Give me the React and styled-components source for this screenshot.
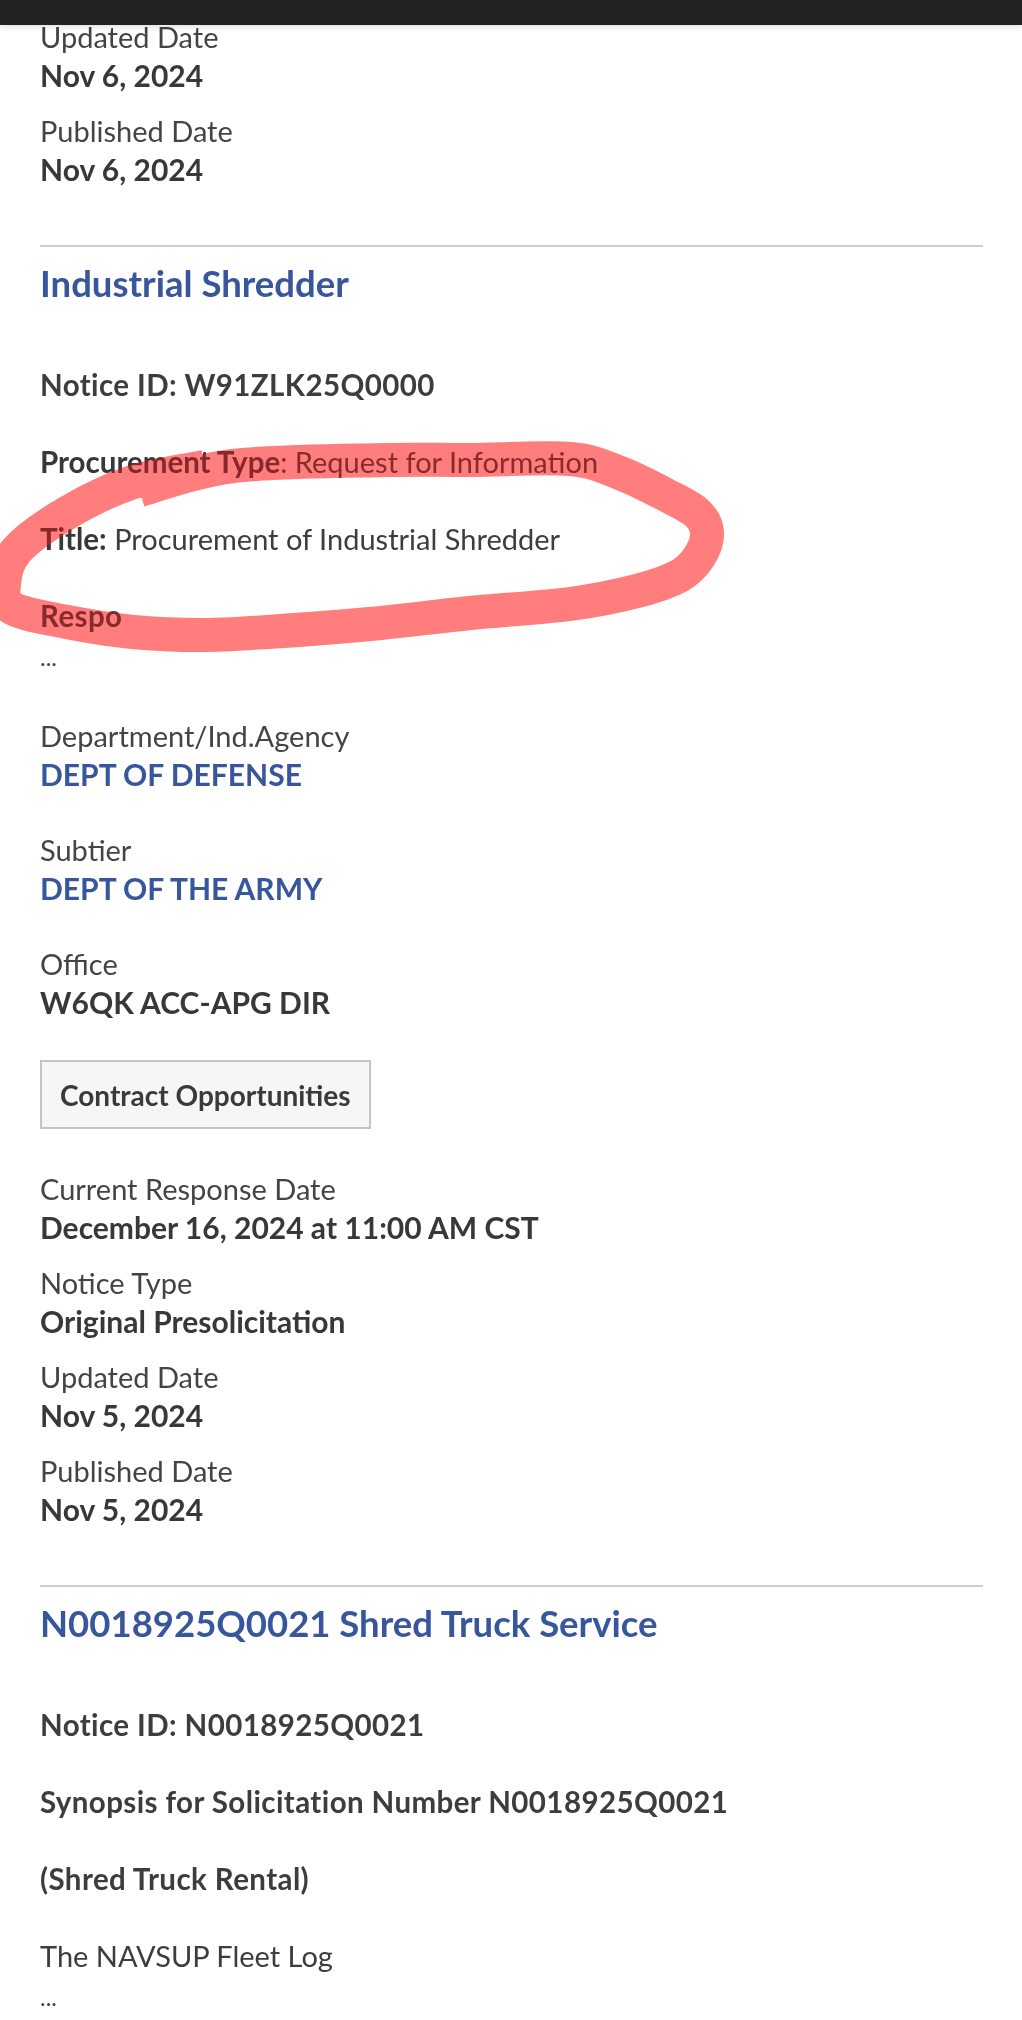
import React from "react";
import styled, { createGlobalStyle } from "styled-components";

const GlobalStyle = createGlobalStyle`
  html, body {
    margin: 0;
    padding: 0;
    background: #ffffff;
  }
  body {
    font-family: Lato, "Liberation Sans", sans-serif;
    color: #3a3a3a;
  }
`;

const Page = styled.div`
  position: relative;
  width: 1022px;
  height: 2020px;
  box-sizing: border-box;
  padding: 18px 39px 0 40px;
  overflow: hidden;
`;

const TopBar = styled.div`
  position: absolute;
  top: 0;
  left: 0;
  right: 0;
  height: 25px;
  background: #232323;
  box-shadow: 0 2px 6px rgba(0, 0, 0, 0.12);
  z-index: 5;
`;

const FieldList = styled.div`
  display: flex;
  flex-direction: column;
  gap: ${props => props.$gap}px;
`;

const FieldWrap = styled.div`
  display: flex;
  flex-direction: column;
`;

const Label = styled.div`
  font-size: 29px;
  line-height: 38px;
  color: #444444;
`;

const Value = styled.div`
  font-size: 30px;
  line-height: 38px;
  font-weight: 700;
  color: ${props => (props.$link ? "#37569c" : "#383838")};
`;

const Divider = styled.div`
  height: 2px;
  background: #cfcfcf;
  margin: ${props => props.$top}px 0 0;
`;

const NoticeTitle = styled.a`
  display: block;
  margin-top: 14px;
  font-size: 36.5px;
  line-height: 44px;
  font-weight: 700;
  color: #37569c;
  text-decoration: none;
`;

const Description = styled.div`
  display: flex;
  flex-direction: column;
  gap: 39px;
  margin-top: 61px;
`;

const Para = styled.p`
  margin: 0;
  font-size: ${props => (props.$bold ? 29.5 : 29)}px;
  line-height: 38px;
  letter-spacing: ${props => (props.$bold ? 0.4 : 0)}px;
  color: #3d3d3d;
  font-weight: ${props => (props.$bold ? 700 : 400)};

  strong {
    font-size: 29.5px;
    font-weight: 700;
    color: #383838;
  }
`;

const Ellipsis = styled.div`
  font-size: 24px;
  line-height: 38px;
  margin-top: 3px;
  color: #444444;
`;

const OrgBlock = styled(FieldList)`
  margin-top: 41px;
`;

const TagButton = styled.button`
  display: block;
  margin-top: 39px;
  height: 69px;
  padding: 0 18px;
  box-sizing: border-box;
  border: 2px solid #c4c4c4;
  background: #f6f6f6;
  font-family: Lato, "Liberation Sans", sans-serif;
  font-size: 28px;
  font-weight: 700;
  color: #3a3a3a;
`;

const DateBlock = styled(FieldList)`
  margin-top: ${props => props.$top}px;
`;

// two stacked layers give the marker its look: a thin red wash, then a multiplied pink
const Annotation = styled.svg`
  position: absolute;
  top: 0;
  left: 0;
  width: 1022px;
  height: 700px;
  pointer-events: none;
  mix-blend-mode: ${props => props.$blend};
  z-index: 4;
`;

// centre line of the hand-drawn marker loop, in page pixels
const LOOP = [
    [140, 490], [233, 466], [390, 460], [470, 460], [570, 459], [620, 473],
    [668, 496], [697, 513], [707, 533], [699, 557], [679, 576], [637, 591],
    [570, 604], [470, 613], [370, 624], [267, 632], [200, 635], [133, 632],
    [67, 622], [12, 608], [4, 584], [17, 550], [67, 513], [133, 482], [205, 467]
];

function smoothPath(pts) {
    let d = `M ${pts[0][0]} ${pts[0][1]}`;
    for (let i = 0; i < pts.length - 1; i++) {
        const p0 = pts[i - 1] || pts[i];
        const p1 = pts[i];
        const p2 = pts[i + 1];
        const p3 = pts[i + 2] || p2;
        const c1 = [p1[0] + (p2[0] - p0[0]) / 6, p1[1] + (p2[1] - p0[1]) / 6];
        const c2 = [p2[0] - (p3[0] - p1[0]) / 6, p2[1] - (p3[1] - p1[1]) / 6];
        d += ` C ${c1[0]} ${c1[1]} ${c2[0]} ${c2[1]} ${p2[0]} ${p2[1]}`;
    }
    return d;
}

const LOOP_PATH = smoothPath(LOOP);

const Marker = ({ blend, color }) => (
    <Annotation $blend={blend} viewBox="0 0 1022 700">
        <path d={LOOP_PATH} fill="none" stroke={color} strokeWidth="34"
            strokeLinejoin="round" strokeLinecap="butt"/>
    </Annotation>
);

const Field = ({ label, value, link }) => (
    <FieldWrap>
        <Label>{label}</Label>
        <Value $link={link}>{value}</Value>
    </FieldWrap>
);

const App = () => {
    return <>
        <GlobalStyle/>
        <Page>
            <TopBar/>
            <FieldList $gap={18}>
                <Field label="Updated Date" value="Nov 6, 2024"/>
                <Field label="Published Date" value="Nov 6, 2024"/>
            </FieldList>

            <Divider $top={57}/>
            <NoticeTitle href="#">Industrial Shredder</NoticeTitle>
            <Description>
                <Para $bold>Notice ID: W91ZLK25Q0000</Para>
                <Para><strong>Procurement Type</strong>: Request for Information</Para>
                <Para><strong>Title:</strong> Procurement of Industrial Shredder</Para>
                <Para $bold>Respo</Para>
            </Description>
            <Ellipsis>...</Ellipsis>
            <OrgBlock $gap={38}>
                <Field label="Department/Ind.Agency" value="DEPT OF DEFENSE" link/>
                <Field label="Subtier" value="DEPT OF THE ARMY" link/>
                <Field label="Office" value="W6QK ACC-APG DIR"/>
            </OrgBlock>
            <TagButton>Contract Opportunities</TagButton>
            <DateBlock $gap={18} $top={41}>
                <Field label="Current Response Date" value="December 16, 2024 at 11:00 AM CST"/>
                <Field label="Notice Type" value="Original Presolicitation"/>
                <Field label="Updated Date" value="Nov 5, 2024"/>
                <Field label="Published Date" value="Nov 5, 2024"/>
            </DateBlock>

            <Divider $top={57}/>
            <NoticeTitle href="#">N0018925Q0021 Shred Truck Service</NoticeTitle>
            <Description>
                <Para $bold>Notice ID: N0018925Q0021</Para>
                <Para $bold>Synopsis for Solicitation Number N0018925Q0021</Para>
                <Para $bold>(Shred Truck Rental)</Para>
                <Para>The NAVSUP Fleet Log</Para>
            </Description>
            <Ellipsis>...</Ellipsis>

            <Marker blend="normal" color="rgba(255, 60, 60, 0.4)"/>
            <Marker blend="multiply" color="#ffb4b4"/>
        </Page>
    </>;
};

export default App;
